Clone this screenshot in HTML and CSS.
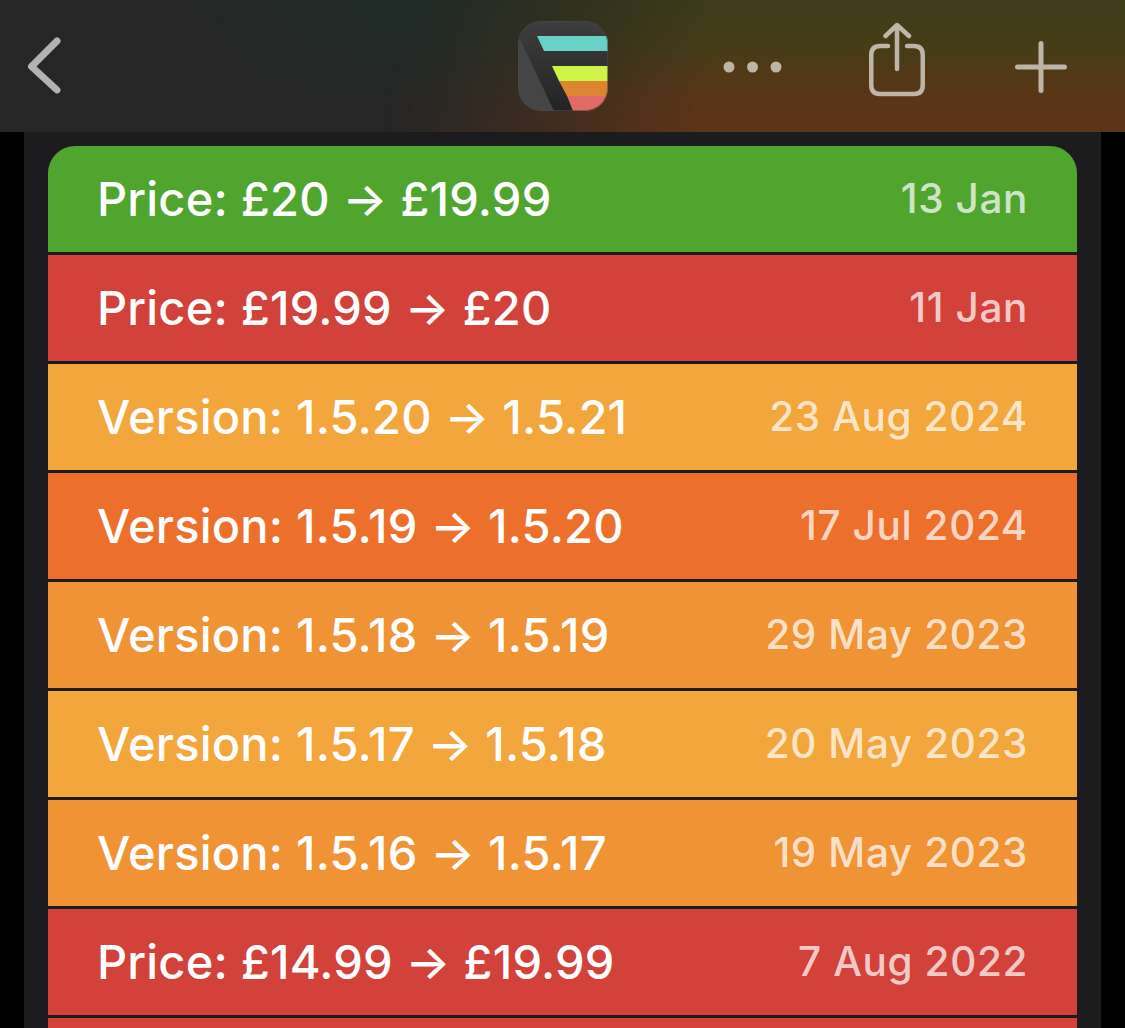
FILE: index.html
```html
<!DOCTYPE html>
<html lang="en">
<head>
<meta charset="utf-8">
<title>Price history</title>
<link rel="stylesheet" href="styles.css">
</head>
<body>
<header class="topbar">
  <svg class="icon back" viewBox="0 0 40 64" aria-hidden="true"><path d="M33 7 L7.5 32.5 L33 56" fill="none" stroke="#b2b2b2" stroke-width="7" stroke-linecap="round" stroke-linejoin="round"/></svg>
  <svg class="icon logo" viewBox="0 0 90 90" aria-hidden="true">
    <defs>
      <clipPath id="squircle"><rect width="90" height="90" rx="23"/></clipPath>
      <linearGradient id="logobg" x1="0" y1="0" x2="0" y2="1"><stop offset="0" stop-color="#3e3e3e"/><stop offset="1" stop-color="#232323"/></linearGradient>
    </defs>
    <g clip-path="url(#squircle)">
      <rect width="90" height="90" fill="url(#logobg)"/>
      <polygon points="0,19 3,20 36,90 0,90" fill="#454545"/>
      <polygon points="19,15 90,15 90,30 26,30" fill="#67d1c5"/>
      <polygon points="34,45 90,45 90,60 41,60" fill="#cdf349"/>
      <polygon points="41,60 90,60 90,75 49,75" fill="#de8531"/>
      <polygon points="49,75 90,75 90,90 55,90" fill="#e06a65"/>
      <rect x="0.5" y="0.5" width="89" height="89" rx="22.5" fill="none" stroke="#4a4a4a" stroke-opacity="0.6"/>
    </g>
  </svg>
  <svg class="icon dots" viewBox="0 0 60 12" aria-hidden="true"><circle cx="6" cy="6" r="5.5" fill="#bdb5a8"/><circle cx="29.5" cy="6" r="5.5" fill="#bdb5a8"/><circle cx="53" cy="6" r="5.5" fill="#bdb5a8"/></svg>
  <svg class="icon share" viewBox="0 0 60 76" aria-hidden="true"><path d="M21 24 H13 Q4.25 24 4.25 33 V63 Q4.25 72 13 72 H47 Q55.75 72 55.75 63 V33 Q55.75 24 47 24 H40 M30 47 V4 M18.5 14 L30 3 L42 14" fill="none" stroke="#bdb5a8" stroke-width="4.5" stroke-linecap="round" stroke-linejoin="round"/></svg>
  <svg class="icon plus" viewBox="0 0 54 54" aria-hidden="true"><path d="M27 3.5 V50.5 M3.5 27 H50.5" fill="none" stroke="#bdb5a8" stroke-width="5" stroke-linecap="round"/></svg>
</header>
<main class="panel">
  <ul class="history">
    <li class="row green"><span class="change">Price: £20 → £19.99</span><span class="date">13 Jan</span></li>
    <li class="row red"><span class="change">Price: £19.99 → £20</span><span class="date">11 Jan</span></li>
    <li class="row amber"><span class="change">Version: 1.5.20 → 1.5.21</span><span class="date">23 Aug 2024</span></li>
    <li class="row deep"><span class="change">Version: 1.5.19 → 1.5.20</span><span class="date">17 Jul 2024</span></li>
    <li class="row orange"><span class="change">Version: 1.5.18 → 1.5.19</span><span class="date">29 May 2023</span></li>
    <li class="row amber"><span class="change">Version: 1.5.17 → 1.5.18</span><span class="date">20 May 2023</span></li>
    <li class="row orange"><span class="change">Version: 1.5.16 → 1.5.17</span><span class="date">19 May 2023</span></li>
    <li class="row red"><span class="change">Price: £14.99 → £19.99</span><span class="date">7 Aug 2022</span></li>
    <li class="row red"></li>
  </ul>
</main>
</body>
</html>
```
FILE: styles.css
```css
* { box-sizing: border-box; }
html, body { margin: 0; height: 100%; overflow: hidden; background: #000; }
body { font-family: Inter, "Liberation Sans", sans-serif; }

.topbar {
  position: relative;
  height: 132px;
  display: flex;
  align-items: flex-start;
  background:
    radial-gradient(ellipse 220px 110px at 400px 0, rgba(28,44,40,.8) 0%, rgba(28,44,40,0) 100%),
    #262626;
}
.topbar::before {
  content: "";
  position: absolute;
  inset: 0;
  background: linear-gradient(180deg, #3e3c19 0%, #463c17 35%, #5a3617 75%, #5f3318 100%);
  -webkit-mask-image: linear-gradient(100deg, transparent 400px, rgba(0,0,0,.35) 530px, #000 710px);
  mask-image: linear-gradient(100deg, transparent 400px, rgba(0,0,0,.35) 530px, #000 710px);
}
.icon { display: block; flex: none; position: relative; }
.back { width: 40px; height: 64px; margin: 34px 0 0 24px; }
.logo { width: 90px; height: 90px; margin: 21px 0 0 454px; }
.dots { width: 60px; height: 12px; margin: 61px 0 0 115px; }
.share { width: 60px; height: 76px; margin: 22px 0 0 84px; }
.plus { width: 54px; height: 54px; margin: 40px 0 0 87px; }

.panel {
  margin: 0 24px;
  height: 896px;
  padding: 14px 24px 0;
  background: #1c1c1e;
  overflow: hidden;
}
.history { list-style: none; margin: 0; padding: 0; display: flex; flex-direction: column; gap: 3px; }
.row {
  flex: none;
  height: 106px;
  padding: 0 49px 2px 49px;
  display: flex;
  align-items: center;
  justify-content: space-between;
  color: #fff;
}
.row:first-child { border-radius: 27px 27px 0 0; }
.change { font-size: 47px; font-weight: 500; letter-spacing: 0.2px; white-space: nowrap; }
.date { font-size: 40.5px; font-weight: 500; letter-spacing: 0.6px; color: rgba(255,255,255,.74); white-space: nowrap; }
.green { background: #50a52f; }
.red { background: #d2423a; }
.amber { background: #f2a63b; }
.deep { background: #ec702c; }
.orange { background: #f09335; }
```
